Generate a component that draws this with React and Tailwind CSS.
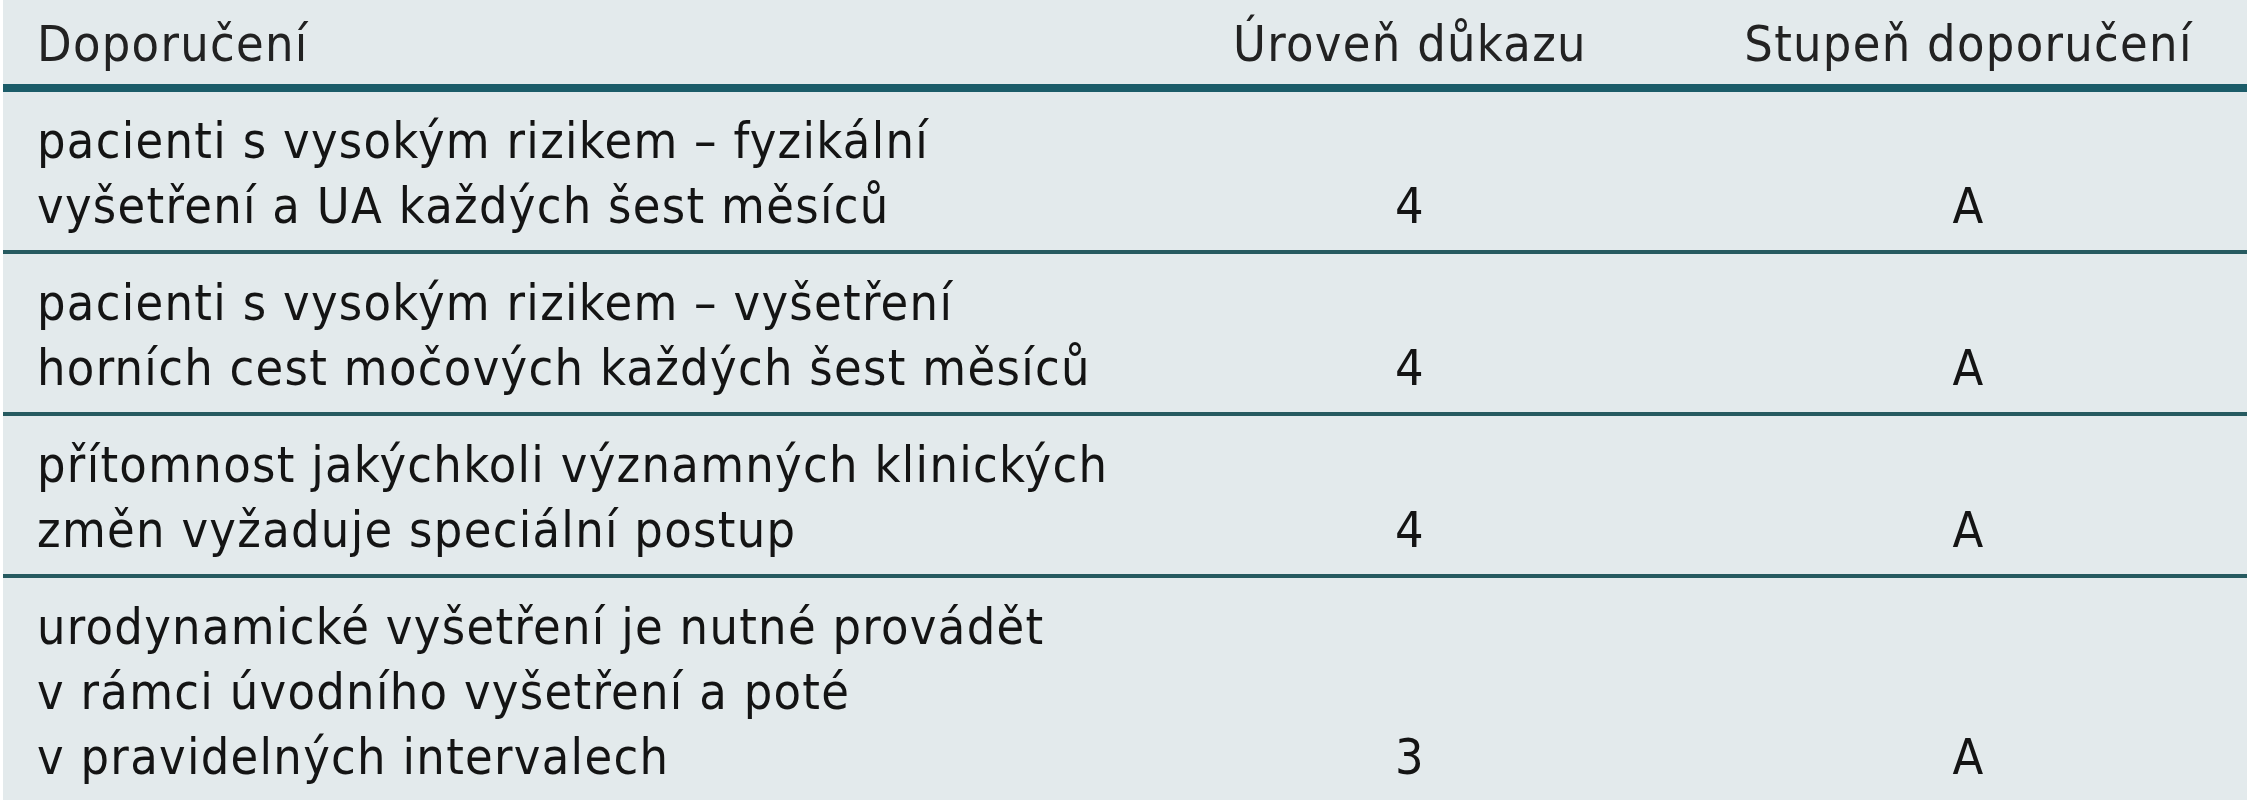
const rows = [
  {
    text: ['pacienti s vysokým rizikem – fyzikální', 'vyšetření a UA každých šest měsíců'],
    level: '4',
    grade: 'A',
  },
  {
    text: ['pacienti s vysokým rizikem – vyšetření', 'horních cest močových každých šest měsíců'],
    level: '4',
    grade: 'A',
  },
  {
    text: ['přítomnost jakýchkoli významných klinických', 'změn vyžaduje speciální postup'],
    level: '4',
    grade: 'A',
  },
  {
    text: [
      'urodynamické vyšetření je nutné provádět',
      'v rámci úvodního vyšetření a poté',
      'v pravidelných intervalech',
    ],
    level: '3',
    grade: 'A',
  },
]

export default function App() {
  return (
    <div className="min-h-[800px] w-full bg-white">
      <div
        className="ml-[3px] w-[2244px] bg-[#e3eaec] text-[50px] leading-[65px] tracking-[1.3px] text-[#141414]"
        style={{ fontFamily: '"DejaVu Sans Condensed", "Liberation Sans", Arial, sans-serif' }}
      >
        <div className="grid h-[92px] grid-cols-[1127px_560px_1fr] border-b-[8px] border-[#1b5c69] pt-[12px] text-[#222]">
          <div className="pl-[34px]">Doporučení</div>
          <div className="text-center">Úroveň důkazu</div>
          <div className="text-center">Stupeň doporučení</div>
        </div>
        {rows.map((row, i) => (
          <div
            key={i}
            className={`grid grid-cols-[1127px_560px_1fr] items-end pt-[17px] pb-[11px] ${
              i < rows.length - 1 ? 'border-b-4 border-[#265a60]' : ''
            }`}
          >
            <div className="pl-[34px]">
              {row.text.map((line, j) => (
                <div key={j} className="whitespace-nowrap">
                  {line}
                </div>
              ))}
            </div>
            <div className="text-center">{row.level}</div>
            <div className="text-center">{row.grade}</div>
          </div>
        ))}
      </div>
    </div>
  )
}
